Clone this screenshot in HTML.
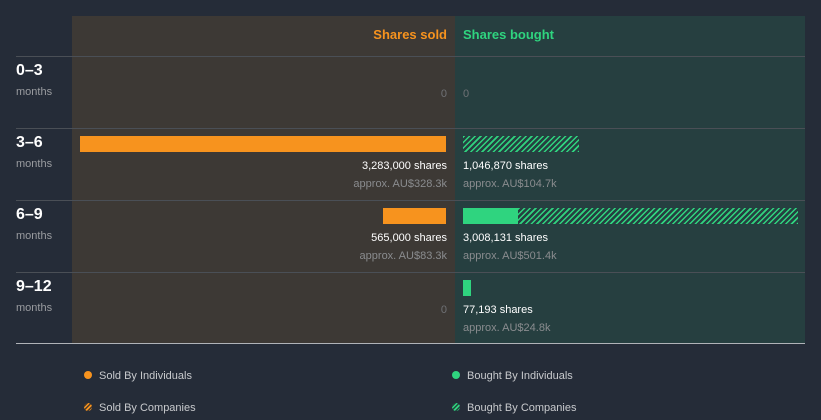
<!DOCTYPE html><html><head><style>
body{margin:0;width:821px;height:420px;background:#252c38;font-family:"Liberation Sans",sans-serif;position:relative;overflow:hidden}
div,span{position:absolute}
.t{font-size:11px;white-space:nowrap}
.w{color:#fff}.g{color:#8a8c8f}
.r{text-align:right}
.hl{left:16px;width:789px;height:1px;background:#4a4f56}
.lab{left:16px;color:#fff;font-weight:bold;font-size:16px}
.mo{left:16px;color:#9a9ca0;font-size:11px}
.hat{background:repeating-linear-gradient(135deg,#2fd47f 0 1.5px,transparent 1.5px 4px)}
</style></head><body>
<div style="left:72px;top:16px;width:383px;height:327px;background:#3d3935"></div>
<div style="left:455px;top:16px;width:350px;height:327px;background:#263f40"></div>
<div class="t r" style="left:200px;width:247px;top:27px;font-size:13px;font-weight:bold;color:#f7931e">Shares sold</div>
<div class="t" style="left:463px;top:27px;font-size:13px;font-weight:bold;color:#2fd47f">Shares bought</div>
<div class="hl" style="top:56px"></div><div class="hl" style="top:128px"></div><div class="hl" style="top:200px"></div><div class="hl" style="top:272px"></div>
<div class="hl" style="top:343px;background:#b0b3b8"></div>
<div class="lab" style="top:62px">0–3</div><div class="mo" style="top:86px">months</div>
<div class="lab" style="top:134px">3–6</div><div class="mo" style="top:158px">months</div>
<div class="lab" style="top:206px">6–9</div><div class="mo" style="top:230px">months</div>
<div class="lab" style="top:278px">9–12</div><div class="mo" style="top:302px">months</div>
<div class="t r" style="left:300px;width:147px;top:88px;color:#6f7175">0</div>
<div class="t" style="left:463px;top:88px;color:#6f7175">0</div>
<div style="left:80px;top:136px;width:366px;height:16px;background:#f7931e"></div>
<div class="hat" style="left:463px;top:136px;width:116px;height:16px"></div>
<div class="t r w" style="left:200px;width:247px;top:160px">3,283,000 shares</div>
<div class="t r g" style="left:200px;width:247px;top:178px">approx. AU$328.3k</div>
<div class="t w" style="left:463px;top:160px">1,046,870 shares</div>
<div class="t g" style="left:463px;top:178px">approx. AU$104.7k</div>
<div style="left:383px;top:208px;width:63px;height:16px;background:#f7931e"></div>
<div style="left:463px;top:208px;width:55px;height:16px;background:#2fd47f"></div>
<div class="hat" style="left:518px;top:208px;width:280px;height:16px"></div>
<div class="t r w" style="left:200px;width:247px;top:232px">565,000 shares</div>
<div class="t r g" style="left:200px;width:247px;top:250px">approx. AU$83.3k</div>
<div class="t w" style="left:463px;top:232px">3,008,131 shares</div>
<div class="t g" style="left:463px;top:250px">approx. AU$501.4k</div>
<div class="t r" style="left:300px;width:147px;top:304px;color:#6f7175">0</div>
<div style="left:463px;top:280px;width:8px;height:16px;background:#2fd47f"></div>
<div class="t w" style="left:463px;top:304px">77,193 shares</div>
<div class="t g" style="left:463px;top:322px">approx. AU$24.8k</div>
<div style="left:84px;top:371px;width:8px;height:8px;border-radius:50%;background:#f7931e"></div>
<div class="t" style="left:99px;top:370px;color:#c8cacd">Sold By Individuals</div>
<div style="left:84px;top:403px;width:8px;height:8px;border-radius:50%;background:repeating-linear-gradient(135deg,#f7931e 0 1.5px,#4a3a2a 1.5px 3px)"></div>
<div class="t" style="left:99px;top:402px;color:#c8cacd">Sold By Companies</div>
<div style="left:452px;top:371px;width:8px;height:8px;border-radius:50%;background:#2fd47f"></div>
<div class="t" style="left:467px;top:370px;color:#c8cacd">Bought By Individuals</div>
<div style="left:452px;top:403px;width:8px;height:8px;border-radius:50%;background:repeating-linear-gradient(135deg,#2fd47f 0 1.5px,#23463e 1.5px 3px)"></div>
<div class="t" style="left:467px;top:402px;color:#c8cacd">Bought By Companies</div>
</body></html>
